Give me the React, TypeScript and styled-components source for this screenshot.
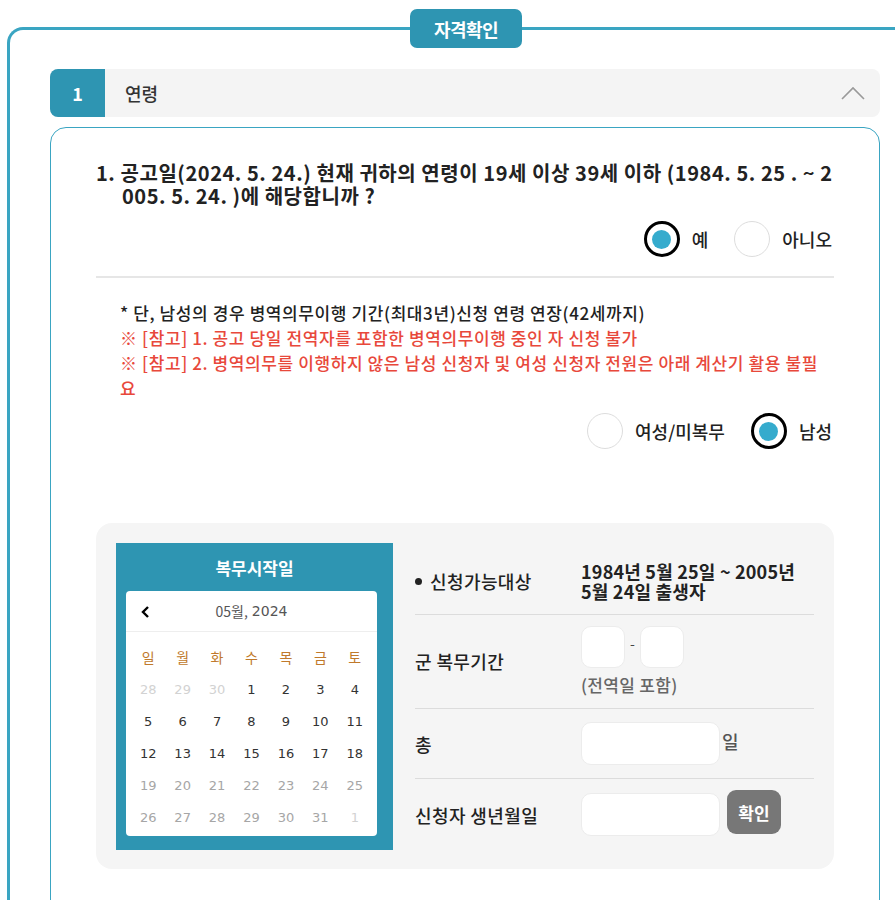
import React from "react";
import styled, { createGlobalStyle } from "styled-components";

const Global = createGlobalStyle`
  html, body { margin: 0; padding: 0; background: #fff; }
  body {
    font-family: "Noto Sans CJK KR", "Noto Sans", sans-serif;
    color: #222;
    overflow: hidden;
    width: 895px;
  }
  * { box-sizing: border-box; }
`;

const Outer = styled.section`
  position: relative;
  margin: 27px 0 0 7px;
  width: 900px;
  border: 3px solid #3aa5c2;
  border-right: none;
  border-bottom: none;
  border-top-left-radius: 16px;
  padding: 39px 0 0 40px;
  min-height: 900px;
`;

const Badge = styled.div`
  position: absolute;
  top: -21px;
  left: 400px;
  width: 112px;
  height: 39px;
  border-radius: 7px;
  background: #2e95b2;
  color: #fff;
  font-weight: 700;
  font-size: 18px;
  display: flex;
  align-items: center;
  justify-content: center;
  letter-spacing: -0.5px;
`;

const Inner = styled.div`
  width: 830px;
`;

const AccHeader = styled.div`
  display: flex;
  align-items: center;
  height: 48px;
  background: #f4f4f4;
  border-radius: 8px;
  overflow: hidden;
`;

const AccNum = styled.div`
  width: 55px;
  height: 100%;
  background: #2e95b2;
  color: #fff;
  font-weight: 700;
  font-size: 18px;
  display: flex;
  align-items: center;
  justify-content: center;
`;

const AccTitle = styled.div`
  flex: 1;
  padding-left: 20px;
  font-size: 18px;
  font-weight: 500;
  color: #333;
`;

const Chevron = styled.svg`
  margin-right: 14px;
`;

const ContentBox = styled.div`
  margin-top: 10px;
  border: 1px solid #3aa5c2;
  border-radius: 16px;
  padding: 33px 45px 40px 45px;
  min-height: 800px;
`;

const Question = styled.p`
  margin: 0;
  font-size: 20px;
  line-height: 23px;
  font-weight: 700;
  color: #222;
  letter-spacing: 0.55px;
  padding-left: 26px;
  text-indent: -26px;
  word-break: break-all;
`;

const RadioRow = styled.div<{ $mt: number }>`
  display: flex;
  justify-content: flex-end;
  align-items: center;
  gap: 26px;
  margin-top: ${(p) => p.$mt}px;
  padding-right: 2px;
`;

const RadioItem = styled.label`
  display: flex;
  align-items: center;
  gap: 12px;
  font-size: 18px;
  font-weight: 500;
  color: #222;
`;

const Circle = styled.span<{ $on?: boolean }>`
  width: 36px;
  height: 36px;
  border-radius: 50%;
  background: #fff;
  border: ${(p) => (p.$on ? "3px solid #000" : "1px solid #ddd")};
  display: flex;
  align-items: center;
  justify-content: center;
  &::after {
    content: "";
    display: ${(p) => (p.$on ? "block" : "none")};
    width: 19px;
    height: 19px;
    border-radius: 50%;
    background: #35abcd;
  }
`;

const Divider = styled.hr`
  margin: 19px 0 0 0;
  border: none;
  border-top: 2px solid #e6e6e6;
`;

const Notes = styled.div`
  margin-top: 22px;
  padding-left: 24px;
  padding-right: 14px;
  font-size: 17px;
  line-height: 25px;
  letter-spacing: 0.6px;
  word-break: break-all;
`;

const Note = styled.div<{ $red?: boolean }>`
  color: ${(p) => (p.$red ? "#e8483b" : "#222")};
  font-weight: 500;
`;

const Panel = styled.div`
  margin-top: 74px;
  background: #f5f5f5;
  border-radius: 16px;
  padding: 20px 20px 19px 20px;
  display: flex;
  gap: 22px;
`;

const CalWrap = styled.div`
  width: 277px;
  background: #2e95b2;
  padding: 0 16px 14px 10px;
  flex-shrink: 0;
`;

const CalTitle = styled.div`
  height: 48px;
  display: flex;
  align-items: center;
  justify-content: center;
  color: #fff;
  font-weight: 700;
  font-size: 17px;
  padding-left: 6px;
`;

const Cal = styled.div`
  background: #fff;
  border-radius: 4px;
  padding-bottom: 3px;
`;

const CalHead = styled.div`
  height: 41px;
  display: flex;
  align-items: center;
  position: relative;
  border-bottom: 1px solid #eee;
  justify-content: center;
  font-family: "DejaVu Sans", Verdana, sans-serif;
  color: #555;
  font-size: 13px;
`;

const PrevBtn = styled.svg`
  position: absolute;
  left: 15px;
  top: 15px;
`;

const Year = styled.span`
  font-size: 14px;
  margin-left: 4px;
`;

const Mon = styled.span`
  font-family: "Noto Sans CJK KR", sans-serif;
  font-size: 14px;
`;

const Grid = styled.div`
  display: grid;
  grid-template-columns: repeat(7, 1fr);
  grid-auto-rows: 32px;
  padding: 9px 5px 0 5px;
`;

type Tone = "wd" | "faint" | "dark" | "muted";

const Cell = styled.div<{ $tone: Tone }>`
  display: flex;
  align-items: center;
  justify-content: center;
  font-family: ${(p) => (p.$tone === "wd" ? `"Noto Sans CJK KR", sans-serif` : `"DejaVu Sans", Verdana, sans-serif`)};
  font-size: ${(p) => (p.$tone === "wd" ? "14px" : "13px")};
  color: ${(p) =>
    p.$tone === "wd" ? "#c0792b" : p.$tone === "faint" ? "#d2d2d2" : p.$tone === "muted" ? "#a6a6a6" : "#333"};
`;

const Table = styled.div`
  flex: 1;
`;

const Row = styled.div<{ $pt: number; $pb: number; $last?: boolean }>`
  display: flex;
  align-items: center;
  padding: ${(p) => p.$pt}px 0 ${(p) => p.$pb}px 0;
  border-bottom: ${(p) => (p.$last ? "none" : "1px solid #dcdcdc")};
`;

const Label = styled.div`
  width: 166px;
  flex-shrink: 0;
  font-size: 18px;
  font-weight: 500;
  color: #222;
  display: flex;
  align-items: center;
  letter-spacing: 0.4px;
`;

const Bullet = styled.span`
  width: 7px;
  height: 7px;
  border-radius: 50%;
  background: #222;
  margin: 0 8px 0 0;
`;

const Value = styled.div`
  font-size: 18px;
  line-height: 20px;
  font-weight: 700;
  color: #222;
  letter-spacing: 0.2px;
  padding-right: 4px;
`;

const Field = styled.div`
  display: flex;
  flex-direction: column;
`;

const InputLine = styled.div`
  display: flex;
  align-items: center;
`;

const Input = styled.input<{ $w: number; $h: number }>`
  width: ${(p) => p.$w}px;
  height: ${(p) => p.$h}px;
  border: 1px solid #ececec;
  border-radius: 10px;
  background: #fff;
  outline: none;
  padding: 0 8px;
  font-size: 16px;
`;

const Dash = styled.span`
  width: 15px;
  text-align: center;
  font-size: 14px;
  color: #444;
  align-self: flex-start;
  margin-top: 7px;
`;

const Caption = styled.div`
  margin-top: 7px;
  font-size: 17px;
  line-height: 20px;
  color: #666;
  font-weight: 500;
  letter-spacing: 0.3px;
`;

const Unit = styled.span`
  margin-left: 2px;
  font-size: 18px;
  color: #555;
  font-weight: 500;
  align-self: flex-start;
  margin-top: 6px;
`;

const Button = styled.button`
  margin-left: 7px;
  width: 54px;
  height: 44px;
  margin-top: -3px;
  border: none;
  border-radius: 9px;
  background: #777;
  color: #fff;
  font-family: "Noto Sans CJK KR", sans-serif;
  font-weight: 700;
  font-size: 17px;
  align-self: flex-start;
`;

const weekdays = ["일", "월", "화", "수", "목", "금", "토"];

const days: { d: number; t: Tone }[] = [
  ...[28, 29, 30].map((d) => ({ d, t: "faint" as Tone })),
  ...Array.from({ length: 18 }, (_, i) => ({ d: i + 1, t: "dark" as Tone })),
  ...Array.from({ length: 13 }, (_, i) => ({ d: i + 19, t: "muted" as Tone })),
  { d: 1, t: "faint" as Tone },
];

export default function App() {
  return (
    <>
      <Global />
      <Outer>
        <Badge>자격확인</Badge>
        <Inner>
          <AccHeader>
            <AccNum>1</AccNum>
            <AccTitle>연령</AccTitle>
            <Chevron width="26" height="16" viewBox="0 0 26 16">
              <polyline points="2,14 13,3 24,14" fill="none" stroke="#999" strokeWidth="1.6" />
            </Chevron>
          </AccHeader>
          <ContentBox>
            <Question>
              1. 공고일(2024. 5. 24.) 현재 귀하의 연령이 19세 이상 39세 이하 (1984. 5. 25 . ~ 2005. 5. 24. )에 해당합니까 ?
            </Question>
            <RadioRow $mt={14}>
              <RadioItem>
                <Circle $on />
                예
              </RadioItem>
              <RadioItem>
                <Circle />
                아니오
              </RadioItem>
            </RadioRow>
            <Divider />
            <Notes>
              <Note>* 단, 남성의 경우 병역의무이행 기간(최대3년)신청 연령 연장(42세까지)</Note>
              <Note $red>※ [참고] 1. 공고 당일 전역자를 포함한 병역의무이행 중인 자 신청 불가</Note>
              <Note $red>※ [참고] 2. 병역의무를 이행하지 않은 남성 신청자 및 여성 신청자 전원은 아래 계산기 활용 불필요</Note>
            </Notes>
            <RadioRow $mt={13}>
              <RadioItem>
                <Circle />
                여성/미복무
              </RadioItem>
              <RadioItem>
                <Circle $on />
                남성
              </RadioItem>
            </RadioRow>
            <Panel>
              <CalWrap>
                <CalTitle>복무시작일</CalTitle>
                <Cal>
                  <CalHead>
                    <PrevBtn width="10" height="12" viewBox="0 0 10 12">
                      <polyline points="7,1 2,6 7,11" fill="none" stroke="#000" strokeWidth="2.4" />
                    </PrevBtn>
                    <Mon>05월,</Mon>
                    <Year>2024</Year>
                  </CalHead>
                  <Grid>
                    {weekdays.map((w) => (
                      <Cell key={w} $tone="wd">
                        {w}
                      </Cell>
                    ))}
                    {days.map((x, i) => (
                      <Cell key={i} $tone={x.t}>
                        {x.d}
                      </Cell>
                    ))}
                  </Grid>
                </Cal>
              </CalWrap>
              <Table>
                <Row $pt={18} $pb={13}>
                  <Label>
                    <Bullet />
                    신청가능대상
                  </Label>
                  <Value>1984년 5월 25일 ~ 2005년 5월 24일 출생자</Value>
                </Row>
                <Row $pt={11} $pb={13}>
                  <Label>군 복무기간</Label>
                  <Field>
                    <InputLine>
                      <Input $w={44} $h={42} />
                      <Dash>-</Dash>
                      <Input $w={44} $h={42} />
                    </InputLine>
                    <Caption>(전역일 포함)</Caption>
                  </Field>
                </Row>
                <Row $pt={13} $pb={13}>
                  <Label>총</Label>
                  <InputLine>
                    <Input $w={139} $h={43} />
                    <Unit>일</Unit>
                  </InputLine>
                </Row>
                <Row $pt={14} $pb={13} $last>
                  <Label>신청자 생년월일</Label>
                  <InputLine>
                    <Input $w={139} $h={43} />
                    <Button>확인</Button>
                  </InputLine>
                </Row>
              </Table>
            </Panel>
          </ContentBox>
        </Inner>
      </Outer>
    </>
  );
}
